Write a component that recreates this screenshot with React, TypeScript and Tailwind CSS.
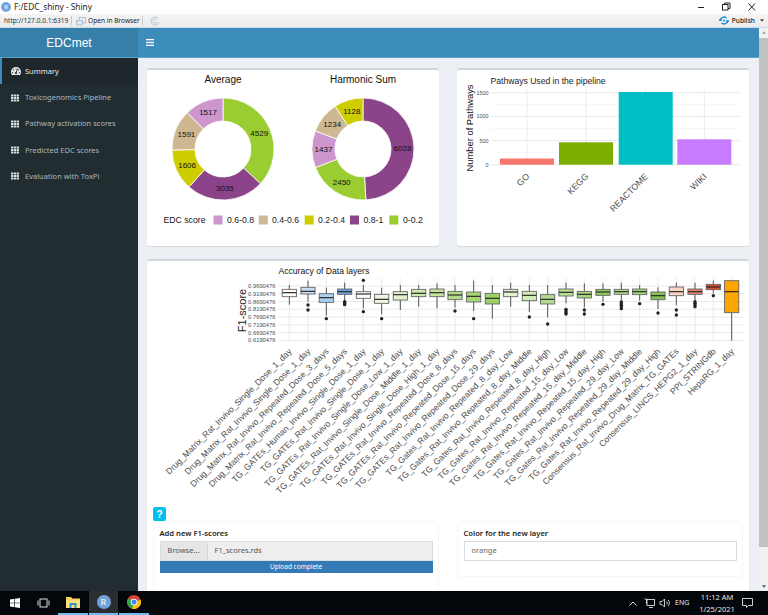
import { FaTachometerAlt, FaTh } from "react-icons/fa";

const SANS = "font-['Noto_Sans','Open_Sans',sans-serif]";

const COLORS: Record<string, string> = {
  green: "#9acd32",
  purple: "#8b4389",
  yellow: "#cdcd00",
  tan: "#cdb891",
  plum: "#cd96cd",
};

type Slice = { value: number; color: string };

function Donut({ cx, cy, data }: { cx: number; cy: number; data: Slice[] }) {
  const total = data.reduce((s, d) => s + d.value, 0);
  const R = 51;
  const r = 28;
  let acc = 0;
  const pt = (rad: number, a: number) => [cx + rad * Math.sin(a), cy - rad * Math.cos(a)];
  return (
    <g>
      {data.map((d) => {
        const a0 = (acc / total) * Math.PI * 2;
        acc += d.value;
        const a1 = (acc / total) * Math.PI * 2;
        const large = a1 - a0 > Math.PI ? 1 : 0;
        const [x0, y0] = pt(R, a0);
        const [x1, y1] = pt(R, a1);
        const [x2, y2] = pt(r, a1);
        const [x3, y3] = pt(r, a0);
        const [lx, ly] = pt(39.5, (a0 + a1) / 2);
        return (
          <g key={d.value}>
            <path
              d={`M${x0} ${y0}A${R} ${R} 0 ${large} 1 ${x1} ${y1}L${x2} ${y2}A${r} ${r} 0 ${large} 0 ${x3} ${y3}Z`}
              fill={d.color}
              stroke="#fff"
              strokeWidth="0.8"
            />
            <text x={lx} y={ly + 2.8} textAnchor="middle" fontSize="8" fill="#111">
              {d.value}
            </text>
          </g>
        );
      })}
    </g>
  );
}

const legend = [
  { x: 213.5, tx: 227, label: "0.6-0.8", c: COLORS.plum },
  { x: 258.8, tx: 272, label: "0.4-0.6", c: COLORS.tan },
  { x: 304.7, tx: 318, label: "0.2-0.4", c: COLORS.yellow },
  { x: 350, tx: 363.5, label: "0.8-1", c: COLORS.purple },
  { x: 389.3, tx: 403, label: "0-0.2", c: COLORS.green },
];

function PieChart() {
  return (
    <svg viewBox="147 70 292 176" className="block w-[292px] h-[176px]" fontFamily="'Liberation Sans',sans-serif">
      <text x="223" y="82.5" textAnchor="middle" fontSize="10" fill="#111">Average</text>
      <text x="363" y="82.5" textAnchor="middle" fontSize="10" fill="#111">Harmonic Sum</text>
      <Donut
        cx={223}
        cy={149}
        data={[
          { value: 4529, color: COLORS.green },
          { value: 3035, color: COLORS.purple },
          { value: 1606, color: COLORS.yellow },
          { value: 1591, color: COLORS.tan },
          { value: 1517, color: COLORS.plum },
        ]}
      />
      <Donut
        cx={363}
        cy={149}
        data={[
          { value: 6028, color: COLORS.purple },
          { value: 2450, color: COLORS.green },
          { value: 1437, color: COLORS.plum },
          { value: 1234, color: COLORS.tan },
          { value: 1128, color: COLORS.yellow },
        ]}
      />
      <text x="163.5" y="223" fontSize="8.7" fill="#111">EDC score</text>
      {legend.map((l) => (
        <g key={l.label}>
          <rect x={l.x} y="215.5" width="9" height="9" fill={l.c} />
          <text x={l.tx} y="223" fontSize="8.7" fill="#222">{l.label}</text>
        </g>
      ))}
    </svg>
  );
}

function BarChart() {
  const bars = [
    { x: 500, top: 158.5, c: "#F8766D", cx: 527, l: "GO" },
    { x: 559, top: 142.3, c: "#7CAE00", cx: 586, l: "KEGG" },
    { x: 618.7, top: 92, c: "#00BFC4", cx: 645.7, l: "REACTOME" },
    { x: 677.3, top: 139.3, c: "#C77CFF", cx: 704.3, l: "WIKI" },
  ];
  const majors = [
    { y: 164.7, l: "0" },
    { y: 140.6, l: "500" },
    { y: 116.5, l: "1000" },
    { y: 92.7, l: "1500" },
  ];
  const minors = [152.6, 128.5, 104.6];
  return (
    <svg viewBox="457 70 292 176" className="block w-[292px] h-[176px]" fontFamily="'Liberation Sans',sans-serif">
      <text x="490.5" y="84" fontSize="8.6" fill="#222">Pathways Used in the pipeline</text>
      {minors.map((y) => (
        <line key={y} x1="491" x2="740" y1={y} y2={y} stroke="#f2f2f2" strokeWidth="0.6" />
      ))}
      {majors.map((m) => (
        <g key={m.y}>
          <line x1="491" x2="740" y1={m.y} y2={m.y} stroke="#ebebeb" strokeWidth="1" />
          <text x="488.5" y={m.y + 1.9} textAnchor="end" fontSize="5.4" fill="#4d4d4d">{m.l}</text>
        </g>
      ))}
      {bars.map((b) => (
        <line key={b.cx} x1={b.cx} x2={b.cx} y1="89" y2="165" stroke="#ebebeb" strokeWidth="1" />
      ))}
      {bars.map((b) => (
        <g key={b.l}>
          <rect x={b.x} y={b.top} width="54" height={164.7 - b.top} fill={b.c} />
          <text
            transform={`rotate(-45 ${b.cx + 3} 177)`}
            x={b.cx + 3}
            y="177"
            textAnchor="end"
            fontSize="8.8"
            fill="#4d4d4d"
          >
            {b.l}
          </text>
        </g>
      ))}
      <text transform="rotate(-90 473 128)" x="473" y="128" textAnchor="middle" fontSize="9.4" fill="#111">
        Number of Pathways
      </text>
    </svg>
  );
}

type B = { x: number; t: number; q1: number; m: number; q3: number; b: number; o: number[]; c: string; l: string };

const L1 = 140;
const L2 = 450;
const boxes: B[] = [
  { x: L1 + 448 / 3, t: 75, q1: 88, m: 98, q3: 110, b: 134, o: [], c: "#ffffff", l: "Drug_Matrix_Rat_Invivo_Single_Dose_1_day" },
  { x: L1 + 504 / 3, t: 62, q1: 82, m: 94, q3: 102, b: 125, o: [135, 150], c: "#c6dff5", l: "Drug_Matrix_Rat_Invivo_Single_Dose_1_day" },
  { x: L1 + 559 / 3, t: 83, q1: 101, m: 113, q3: 127, b: 167, o: [176], c: "#a9d2f3", l: "Drug_Matrix_Rat_Invivo_Repeated_Dose_3_days" },
  { x: L1 + 614 / 3, t: 68, q1: 87, m: 95, q3: 103, b: 120, o: [125, 128, 131, 134], c: "#6ea6dc", l: "Drug_Matrix_Rat_Invivo_Repeated_Dose_5_days" },
  { x: L1 + 670 / 3, t: 75, q1: 95, m: 102, q3: 115, b: 145, o: [61, 155], c: "#ffffff", l: "TG_GATEs_Human_Invivo_Single_Dose_1_day" },
  { x: L1 + 725 / 3, t: 83, q1: 103, m: 118, q3: 130, b: 163, o: [176], c: "#eef7e0", l: "TG_GATEs_Rat_Invivo_Single_Dose_1_day" },
  { x: L1 + 781 / 3, t: 75, q1: 95, m: 104, q3: 120, b: 150, o: [], c: "#e2f2cc", l: "TG_GATEs_Rat_Invivo_Single_Dose_Low_1_day" },
  { x: L1 + 836 / 3, t: 75, q1: 88, m: 100, q3: 110, b: 140, o: [], c: "#cdeaaa", l: "TG_GATEs_Rat_Invivo_Single_Dose_Middle_1_day" },
  { x: L1 + 891 / 3, t: 70, q1: 87, m: 98, q3: 110, b: 145, o: [], c: "#c6e6a0", l: "TG_GATEs_Rat_Invivo_Single_Dose_High_1_day" },
  { x: L2 + 15 / 3, t: 75, q1: 94, m: 105, q3: 119, b: 143, o: [153], c: "#b4dd88", l: "TG_GATEs_Rat_Invivo_Repeated_Dose_8_days" },
  { x: L2 + 71 / 3, t: 62, q1: 96, m: 109, q3: 126, b: 153, o: [176], c: "#a4d872", l: "TG_GATEs_Rat_Invivo_Repeated_Dose_15_days" },
  { x: L2 + 127 / 3, t: 75, q1: 100, m: 115, q3: 132, b: 176, o: [], c: "#9ad068", l: "TG_GATEs_Rat_Invivo_Repeated_Dose_29_days" },
  { x: L2 + 182 / 3, t: 68, q1: 88, m: 96, q3: 110, b: 140, o: [], c: "#e2f2cc", l: "TG_Gates_Rat_Invivo_Repeated_8_day_Low" },
  { x: L2 + 238 / 3, t: 75, q1: 94, m: 106, q3: 122, b: 156, o: [171], c: "#d2ecb4", l: "TG_Gates_Rat_Invivo_Repeated_8_day_Middle" },
  { x: L2 + 293 / 3, t: 75, q1: 104, m: 118, q3: 132, b: 172, o: [192], c: "#b4dc90", l: "TG_Gates_Rat_Invivo_Repeated_8_day_High" },
  { x: L2 + 348 / 3, t: 68, q1: 87, m: 97, q3: 108, b: 130, o: [148, 153, 158, 162], c: "#b8e090", l: "TG_Gates_Rat_Invivo_Repeated_15_day_Low" },
  { x: L2 + 403 / 3, t: 70, q1: 94, m: 103, q3: 114, b: 142, o: [150, 162], c: "#a6d67e", l: "TG_Gates_Rat_Invivo_Repeated_15_day_Middle" },
  { x: L2 + 459 / 3, t: 70, q1: 88, m: 96, q3: 106, b: 125, o: [133], c: "#8ecb5c", l: "TG_Gates_Rat_Invivo_Repeated_15_day_High" },
  { x: L2 + 514 / 3, t: 68, q1: 88, m: 95, q3: 103, b: 120, o: [126, 131, 136, 141, 146], c: "#b4e08a", l: "TG_Gates_Rat_Invivo_Repeated_29_day_Low" },
  { x: L2 + 569 / 3, t: 75, q1: 87, m: 95, q3: 104, b: 122, o: [131], c: "#a2d67a", l: "TG_Gates_Rat_Invivo_Repeated_29_day_Middle" },
  { x: L2 + 624 / 3, t: 82, q1: 96, m: 107, q3: 119, b: 147, o: [159], c: "#84c254", l: "TG_Gates_Rat_Invivo_Repeated_29_day_High" },
  { x: L2 + 679 / 3, t: 68, q1: 81, m: 95, q3: 107, b: 136, o: [150, 165], c: "#fcd3c4", l: "Consensus_Rat_Invivo_Drug_Matrix_TG_GATEs" },
  { x: L2 + 735 / 3, t: 68, q1: 87, m: 95, q3: 103, b: 120, o: [125, 130, 135, 140], c: "#e8806a", l: "Consensus_LINCS_HEPG2_1_day" },
  { x: L2 + 790 / 3, t: 62, q1: 73, m: 81, q3: 89, b: 100, o: [107], c: "#e0492e", l: "PPI_STRINGdb" },
  { x: L2 + 845 / 3, t: 62, q1: 62, m: 95, q3: 158, b: 242, o: [], c: "#ffa500", l: "HepaRG_1_day" },
];

const yTicks = [
  ["0.9690476", 286],
  ["0.9190476", 293.8],
  ["0.8690476", 301.5],
  ["0.8190476", 309.2],
  ["0.7690476", 317],
  ["0.7190476", 324.8],
  ["0.6690476", 332.6],
  ["0.6190476", 340.3],
] as const;

function BoxPlot() {
  const Y = (z: number) => 260 + z / 3;
  return (
    <svg viewBox="147 261 602 240" className="block w-[602px] h-[240px]" fontFamily="'Liberation Sans',sans-serif">
      <text x="278.5" y="273.5" fontSize="8.6" fill="#111">Accuracy of Data layers</text>
      <text transform="rotate(-90 245.5 310.5)" x="245.5" y="310.5" textAnchor="middle" fontSize="11" fill="#222">
        F1-score
      </text>
      {yTicks.map(([l, y]) => (
        <g key={l}>
          <line x1="278" x2="743" y1={y} y2={y} stroke="#e8e8e8" strokeWidth="0.9" />
          <text x="275.5" y={y + 2} textAnchor="end" fontSize="5.8" fill="#4d4d4d">{l}</text>
        </g>
      ))}
      {boxes.map((b, i) => (
        <line key={i} x1={b.x} x2={b.x} y1="278" y2="342" stroke="#e8e8e8" strokeWidth="0.9" />
      ))}
      {boxes.map((b, i) => (
        <g key={i}>
          <line x1={b.x} x2={b.x} y1={Y(b.t)} y2={Y(b.b)} stroke="#444" strokeWidth="0.9" />
          <rect x={b.x - 7.1} y={Y(b.q1)} width="14.2" height={(b.q3 - b.q1) / 3} fill={b.c} stroke="#666" strokeWidth="0.9" />
          <line x1={b.x - 7.1} x2={b.x + 7.1} y1={Y(b.m)} y2={Y(b.m)} stroke="#2a2a2a" strokeWidth="1.2" />
          {b.o.map((o) => (
            <circle key={o} cx={b.x} cy={Y(o)} r="1.7" fill="#222" />
          ))}
          <text
            transform={`rotate(-45 ${b.x + 3} 352)`}
            x={b.x + 3}
            y="352"
            textAnchor="end"
            fontSize="8.6"
            fill="#4d4d4d"
          >
            {b.l}
          </text>
        </g>
      ))}
    </svg>
  );
}

const menu = ["Toxicogenomics Pipeline", "Pathway activation scores", "Predicted EDC scores", "Evaluation with ToxPi"];

function Sidebar() {
  return (
    <aside className={`w-[138px] shrink-0 bg-[#222d32] ${SANS} text-[7.5px]`}>
      <div className="h-[26.4px] flex items-center bg-[#1e282c] border-l-2 border-[#3c8dbc] pl-[9px] text-[#e6e6e6]">
        <FaTachometerAlt className="w-[10px] h-[10px] mr-[4px]" />
        <span>Summary</span>
      </div>
      {menu.map((m) => (
        <div key={m} className="h-[26.3px] flex items-center pl-[11px] text-[#a9b8bf]">
          <FaTh className="w-[8px] h-[8px] mr-[6px] text-[#d5dde0]" />
          <span>{m}</span>
        </div>
      ))}
    </aside>
  );
}

function TopBars() {
  return (
    <>
      <div className={`h-[14px] bg-white flex items-center ${SANS} text-[8.3px] text-[#222] shrink-0`}>
        <div className="w-[10px] h-[10px] ml-[1px] rounded-full bg-[#75a5d8] text-white text-[6px] flex items-center justify-center leading-none">R</div>
        <span className="ml-[3px] whitespace-nowrap">F:/EDC_shiny - Shiny</span>
        <div className="ml-auto flex items-center">
          <svg viewBox="0 0 64 12" className="w-[64px] h-[12px] mr-[8px]" fill="none" stroke="#222" strokeWidth="1">
            <path d="M2 6.5h6" />
            <rect x="26.5" y="3.5" width="5.5" height="5.5" />
            <path d="M28.5 3.5V2h5.5v5.5h-2" />
            <path d="M52.5 2.5l6.5 7M59 2.5l-6.5 7" />
          </svg>
        </div>
      </div>
      <div className={`h-[14px] bg-gradient-to-b from-[#f4f4f4] to-[#ececec] border-b border-[#c9dbe8] flex items-center ${SANS} text-[6.6px] text-[#333] shrink-0 whitespace-nowrap`}>
        <span className="ml-[4px] w-[64px]">http://127.0.0.1:6319</span>
        <div className="w-px h-[9px] bg-[#c8c8c8] ml-[3px]" />
        <svg viewBox="0 0 10 10" className="w-[10px] h-[10px] ml-[4px]">
          <rect x="3" y="1.5" width="6.5" height="5.5" fill="#e8eef5" stroke="#9fb4c8" strokeWidth="0.7" />
          <rect x="0.5" y="4.5" width="6" height="4.5" fill="#dfe7f0" stroke="#9fb4c8" strokeWidth="0.7" />
        </svg>
        <span className="ml-[2px] w-[53px] text-[#222]">Open in Browser</span>
        <div className="w-px h-[9px] bg-[#c8c8c8] ml-[1px]" />
        <svg viewBox="0 0 10 10" className="w-[10px] h-[10px] ml-[7px]" fill="none" stroke="#b9c6d2" strokeWidth="1">
          <path d="M8.5 3A4 4 0 1 0 9 6" />
          <path d="M6.5 3.5A2 2 0 1 0 7 6" />
        </svg>
        <div className="ml-auto flex items-center mr-[4px]">
          <svg viewBox="0 0 10 9" className="w-[10px] h-[9px]" fill="none" stroke="#1a8cd8" strokeWidth="1.4">
            <path d="M1 4.5A4 4 0 0 1 7.5 2" />
            <path d="M9 4.5A4 4 0 0 1 2.5 7" />
            <circle cx="5" cy="4.5" r="1" fill="#1a8cd8" stroke="none" />
            <path d="M0 4h3M7 5h3" />
          </svg>
          <span className="ml-[3px] text-[#222] font-medium">Publish</span>
          <svg viewBox="0 0 6 4" className="w-[4px] h-[3px] ml-[5px]"><path d="M0 0h6L3 4z" fill="#444" /></svg>
        </div>
      </div>
    </>
  );
}

function Scrollbar() {
  return (
    <div className="w-[9px] shrink-0 bg-[#f1f1f1] flex flex-col items-center">
      <svg viewBox="0 0 6 4" className="w-[4px] h-[3px] mt-[3px] shrink-0"><path d="M0 4h6L3 0z" fill="#a0a0a0" /></svg>
      <div className="w-full h-[509px] mt-[4px] bg-[#c1c1c1] shrink-0" />
      <svg viewBox="0 0 6 4" className="w-[4px] h-[3px] mt-auto mb-[3px] shrink-0"><path d="M0 0h6L3 4z" fill="#505050" /></svg>
    </div>
  );
}

function Taskbar() {
  return (
    <div className={`h-[24px] shrink-0 bg-[#03060a] flex items-stretch ${SANS} text-white`}>
      <div className="w-[29px] flex items-center justify-center pl-[1px]">
        <svg viewBox="0 0 10 10" className="w-[10px] h-[10px]" fill="#fff">
          <path d="M0 1.4L4.4.8v3.9H0zM5 .7L10 0v4.7H5zM0 5.3h4.4v3.9L0 8.6zM5 5.3h5V10l-5-.7z" />
        </svg>
      </div>
      <div className="w-[29px] flex items-center justify-center">
        <svg viewBox="0 0 13 10" className="w-[13px] h-[10px]" fill="none" stroke="#ddd" strokeWidth="1">
          <rect x="3" y="1" width="7" height="8" />
          <path d="M1 2.5v5M12 2.5v5" />
        </svg>
      </div>
      <div className="w-[30px] flex items-center justify-center border-b-2 border-[#76b9ed]">
        <svg viewBox="0 0 14 12" className="w-[14px] h-[12px]">
          <path d="M0 1h5l1.5 1.5H14V12H0z" fill="#f6cf5e" />
          <rect x="0" y="4" width="14" height="8" fill="#ffdf7d" />
          <rect x="3.5" y="7" width="7" height="5" fill="#2f8fd0" />
          <rect x="5.5" y="9" width="3" height="3" fill="#ffdf7d" />
        </svg>
      </div>
      <div className="w-[29px] ml-[1px] flex items-center justify-center bg-[#2b2e31] border-b-2 border-[#76b9ed]">
        <div className="w-[14px] h-[14px] rounded-full bg-[#6fa3d8] text-white text-[9px] font-['Liberation_Serif',serif] flex items-center justify-center leading-none">R</div>
      </div>
      <div className="w-[30px] ml-[1px] flex items-center justify-center border-b-2 border-[#76b9ed]">
        <svg viewBox="0 0 14 14" className="w-[14px] h-[14px]">
          <circle cx="7" cy="7" r="7" fill="#db4437" />
          <path d="M7 7L1 3.5A7 7 0 0 0 5 13.7z" fill="#2ea44f" />
          <path d="M7 7l6.6-2.3A7 7 0 0 1 5 13.7z" fill="#f4c20d" />
          <circle cx="7" cy="7" r="3.3" fill="#fff" />
          <circle cx="7" cy="7" r="2.5" fill="#4285f4" />
        </svg>
      </div>
      <div className="ml-auto flex items-center">
        <svg viewBox="0 0 8 5" className="w-[8px] h-[5px]" fill="none" stroke="#ddd" strokeWidth="1"><path d="M.5 4.5L4 1l3.5 3.5" /></svg>
        <svg viewBox="0 0 11 10" className="w-[11px] h-[10px] ml-[7px]" fill="none" stroke="#ddd" strokeWidth="0.9">
          <rect x="3" y="1.5" width="7.5" height="6" />
          <path d="M5 9.5h4" />
          <path d="M0.5 1h2v5" />
        </svg>
        <svg viewBox="0 0 11 10" className="w-[11px] h-[10px] ml-[4px]" fill="none" stroke="#ddd" strokeWidth="0.9">
          <path d="M1 3.5h2L5.5 1v8L3 6.5H1z" />
          <path d="M7.5 3.5a2 2 0 0 1 0 3M9 2a4 4 0 0 1 0 6" />
        </svg>
        <span className="text-[7px] ml-[5px] w-[24px] text-[#e8e8e8]">ENG</span>
        <div className="w-[36px] text-[7.5px] leading-[12px] text-center text-[#e8e8e8] whitespace-nowrap">
          <div>11:12 AM</div>
          <div>1/25/2021</div>
        </div>
        <svg viewBox="0 0 11 10" className="w-[11px] h-[10px] ml-[7px] mr-[15px]" fill="none" stroke="#e8e8e8" strokeWidth="0.9">
          <path d="M.5.5h10v7H6.5L4.5 9.5v-2h-4z" />
        </svg>
      </div>
    </div>
  );
}

function Box({ children, className = "" }: { children: React.ReactNode; className?: string }) {
  return (
    <div className={`bg-white border-t-2 border-[#d2d6de] rounded-[3px] shadow-[0_1px_1px_rgba(0,0,0,0.1)] ${className}`}>
      {children}
    </div>
  );
}

export default function App() {
  return (
    <div className="w-[768px] h-[615px] overflow-hidden flex flex-col bg-white">
      <TopBars />
      <div className="flex-1 min-h-0 flex">
        <div className="flex-1 min-w-0 flex flex-col">
          <header className="h-[30px] shrink-0 flex bg-[#3c8dbc] border-b border-[#5ba2cc]">
            <div className="w-[138px] bg-[#367fa9] flex items-center justify-center text-white text-[12px] font-['Liberation_Sans',sans-serif]">
              EDCmet
            </div>
            <div className="flex items-center pl-[8px]">
              <svg viewBox="0 0 8 7" className="w-[8px] h-[7px]" fill="#fff">
                <rect width="8" height="1.3" />
                <rect y="2.85" width="8" height="1.3" />
                <rect y="5.7" width="8" height="1.3" />
              </svg>
            </div>
          </header>
          <div className="flex-1 min-h-0 flex">
            <Sidebar />
            <main className="flex-1 min-w-0 bg-[#ecf0f5] pt-[10px] pl-[9px] pr-[10px] overflow-hidden">
              <div className="grid grid-cols-2 gap-[18px]">
                <Box className="h-[178px]"><PieChart /></Box>
                <Box className="h-[178px]"><BarChart /></Box>
              </div>
              <Box className="mt-[13px] h-[360px]">
                <BoxPlot />
                <div className="ml-[6px] mt-[6px] w-[13px] h-[14px] rounded-[2px] bg-[#00c0ef] text-white text-[10px] font-bold flex items-center justify-center font-['Liberation_Sans',sans-serif]">
                  ?
                </div>
                <div className={`px-[6px] flex items-start gap-[18px] ${SANS}`}>
                  <div className="w-[286px] h-[90px] border border-[#f7f7f7] rounded-[3px] px-[5.5px] pt-[6px]">
                    <div className="text-[7.6px] leading-[11px] font-semibold text-[#222]">Add new F1-scores</div>
                    <div className="mt-[2px] h-[20px] flex bg-[#eeeeee] border border-[#dcdcdc] text-[7.5px] text-[#555]">
                      <div className="w-[47px] bg-[#e6e6e6] border-r border-[#d8d8d8] flex items-center justify-center">Browse...</div>
                      <div className="pl-[7px] flex items-center">F1_scores.rds</div>
                    </div>
                    <div className="h-[12px] bg-[#337ab7] text-white text-[6.5px] flex items-center justify-center">Upload complete</div>
                  </div>
                  <div className="w-[286px] h-[56px] border border-[#f7f7f7] rounded-[3px] px-[5.5px] pt-[6px]">
                    <div className="text-[7.6px] leading-[11px] font-semibold text-[#222]">Color for the new layer</div>
                    <div className="mt-[2px] h-[20px] border border-[#d8dce4] pl-[7px] flex items-center text-[7.5px] text-[#666]">orange</div>
                  </div>
                </div>
              </Box>
            </main>
          </div>
        </div>
        <Scrollbar />
      </div>
      <Taskbar />
    </div>
  );
}
